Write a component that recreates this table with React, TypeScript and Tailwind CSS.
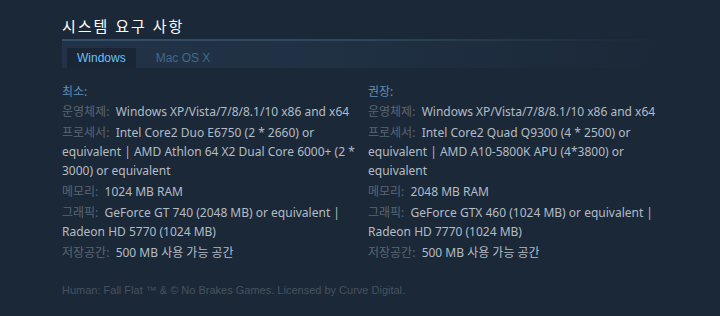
const minReq = [
  { label: "운영체제:", value: "Windows XP/Vista/7/8/8.1/10 x86 and x64" },
  {
    label: "프로세서:",
    value:
      "Intel Core2 Duo E6750 (2 * 2660) or equivalent | AMD Athlon 64 X2 Dual Core 6000+ (2 * 3000) or equivalent",
  },
  { label: "메모리:", value: "1024 MB RAM" },
  {
    label: "그래픽:",
    value: "GeForce GT 740 (2048 MB) or equivalent | Radeon HD 5770 (1024 MB)",
  },
  { label: "저장공간:", value: "500 MB 사용 가능 공간" },
];

const recReq = [
  { label: "운영체제:", value: "Windows XP/Vista/7/8/8.1/10 x86 and x64" },
  {
    label: "프로세서:",
    value:
      "Intel Core2 Quad Q9300 (4 * 2500) or equivalent | AMD A10-5800K APU (4*3800) or equivalent",
  },
  { label: "메모리:", value: "2048 MB RAM" },
  {
    label: "그래픽:",
    value: "GeForce GTX 460 (1024 MB) or equivalent | Radeon HD 7770 (1024 MB)",
  },
  { label: "저장공간:", value: "500 MB 사용 가능 공간" },
];

function ReqColumn({ title, items }: { title: string; items: { label: string; value: string }[] }) {
  return (
    <div className="w-[294px]">
      <div className="text-[#5f8db5] leading-[19px]">{title}</div>
      <ul className="mt-[1px]">
        {items.map((it) => (
          <li key={it.label} className="leading-[19px] mb-[2px]">
            <span className="text-[#5a6672]">{it.label}</span>
            &nbsp;&nbsp;
            <span className="text-[#b3bcc4]">{it.value}</span>
          </li>
        ))}
      </ul>
    </div>
  );
}

export default function App() {
  return (
    <div
      className="w-[720px] h-[316px] bg-[#1b2838] pl-[62px] pt-[16px]"
      style={{ fontFamily: '"Noto Sans", "Noto Sans CJK KR", sans-serif' }}
    >
      <h2 className="text-white text-[15px] tracking-[2px] leading-[20px]">시스템 요구 사항</h2>
      <div className="mt-[3px] w-[600px]">
        <div className="h-[2px] bg-gradient-to-r from-[#33506a] via-[#2c465d] to-[#1b2838]" />
        <div className="h-[27px] bg-gradient-to-r from-[#223347] via-[#1f3043] to-[#1b2838] flex items-end pl-[5px]">
          <div className="h-[20px] px-[10px] bg-[#1a2535] text-[#67c1f5] text-[12px] leading-[20px] font-['Liberation_Sans',sans-serif]">
            Windows
          </div>
          <div className="h-[20px] ml-[10px] px-[10px] text-[#3f6a8a] text-[12px] leading-[20px] font-['Liberation_Sans',sans-serif]">
            Mac OS X
          </div>
        </div>
      </div>
      <div className="mt-[14px] flex gap-[12px] text-[12px]">
        <ReqColumn title="최소:" items={minReq} />
        <ReqColumn title="권장:" items={recReq} />
      </div>
      <div className="mt-[18px] text-[11px] text-[#46535f] font-['Liberation_Sans',sans-serif]">
        Human: Fall Flat ™ &amp; © No Brakes Games. Licensed by Curve Digital.
      </div>
    </div>
  );
}
